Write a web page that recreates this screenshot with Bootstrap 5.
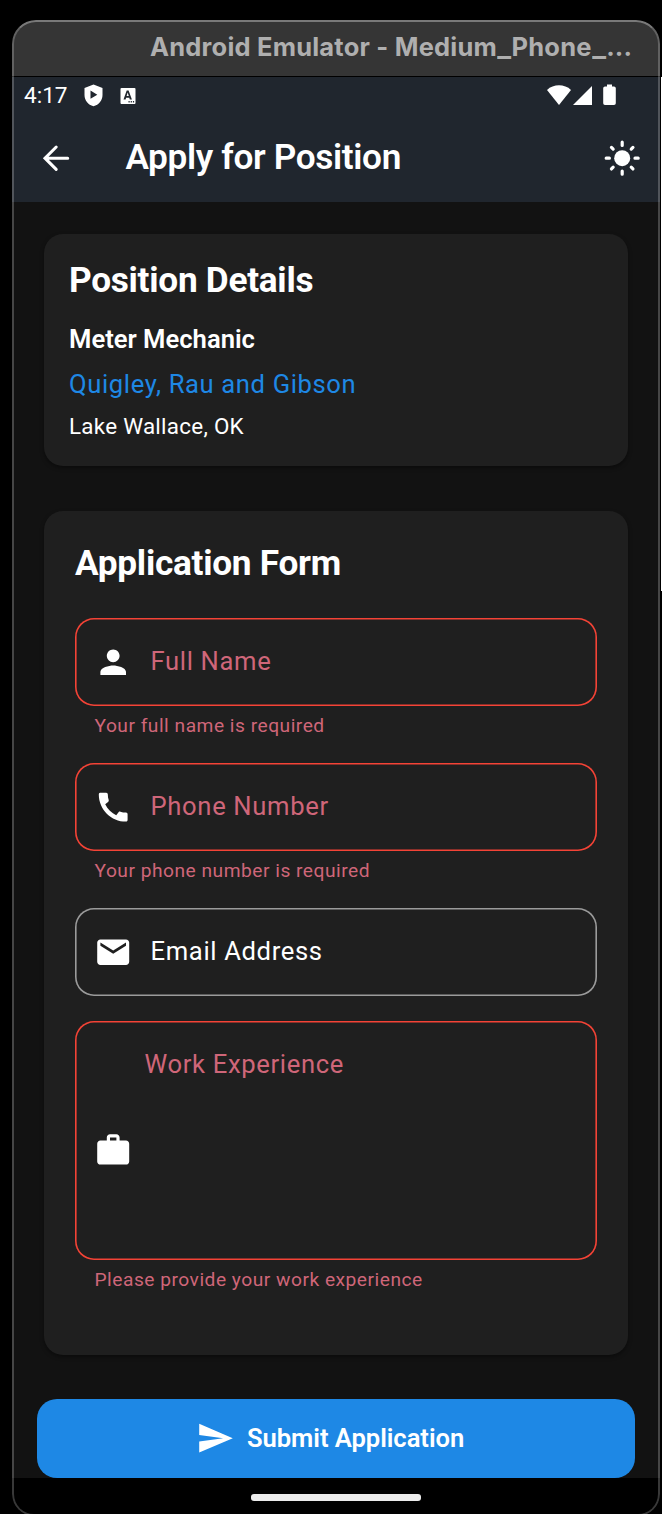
<!DOCTYPE html>
<html lang="en" data-bs-theme="dark">
<head>
<meta charset="utf-8">
<meta name="viewport" content="width=device-width, initial-scale=1">
<title>Apply for Position</title>
<link rel="stylesheet" href="https://cdn.jsdelivr.net/npm/bootstrap@5.3.0/dist/css/bootstrap.min.css">
<style>
  html, body { background: #000; }
  body { width: 662px; height: 1514px; overflow: hidden; color: #fff; font-family: Roboto, "Liberation Sans", sans-serif; line-height: 1; }
  svg { display: block; flex: none; fill: currentColor; }
  .desktop { height: 1514px; padding: 20px 0 0 12px; overflow: hidden; }
  .emulator { width: 648px; height: 1496px; border-radius: 24px 24px 22px 22px; background: #121212; }
  .rim { inset: 0; border: 2px solid rgba(255,255,255,.22); border-top-color: rgba(255,255,255,.34); border-radius: inherit; pointer-events: none; }
  .titlebar { height: 57px; padding: 0 0 4px 138px; background: #353535; border-bottom: 1px solid #000; color: #afafaf; font: 700 25.5px Inter, sans-serif; letter-spacing: .2px; font-feature-settings: "calt" 0; white-space: nowrap; }
  .wide { display: inline-block; transform: scaleX(1.14); margin: 0 1.1px; }
  .top-area { height: 125px; background: #20262e; }
  .status { height: 37px; padding: 0 44px 0 12px; }
  .clock { font-size: 22.6px; width: 59.5px; padding-top: 2px; }
  .appbar { height: 88px; padding: 0 19px 0 25px; }
  .page-title { font-size: 35.2px; font-weight: 600; letter-spacing: -.35px; margin: -2px 0 0 50px; }
  .screen { height: 1276px; padding: 32px 25px 0; }
  .panel { margin: 0 7px; border: 0; border-radius: 19px; background: #1f1f1f; box-shadow: 0 2px 4px rgba(0,0,0,.4); color: #fff; }
  .details { height: 232px; padding: 25px; margin-bottom: 45px; }
  .form-panel { height: 844px; padding: 32px 31px 0; margin-bottom: 44px; }
  .heading { font-size: 35.2px; line-height: 42px; font-weight: 700; letter-spacing: -.27px; margin: 0; }
  .form-panel .heading { margin-top: -1px; margin-bottom: 34px; }
  .role { font-size: 25.6px; line-height: 30px; font-weight: 600; margin-top: 23px; }
  .company { font-size: 25.6px; line-height: 30px; letter-spacing: .62px; color: #1e88e5; margin-top: 15px; }
  .place { font-size: 22.4px; line-height: 30px; letter-spacing: .27px; margin-top: 12px; }
  .field { height: 88px; padding: 0 18.500px; border-radius: 19px; box-shadow: inset 0 0 0 1.6px #9b9b9b; font-size: 25.6px; letter-spacing: .65px; gap: 18.700px; }
  .field.bad { box-shadow: inset 0 0 0 1.6px #f44336; }
  .bad .caption, .problem { color: #cf6679; }
  .problem { font-size: 19.2px; line-height: 24px; letter-spacing: .5px; height: 57px; padding: 7.500px 0 0 19.500px; }
  .field.tall { height: 239px; gap: 12.700px; align-items: flex-start; }
  .tall svg { margin-top: 110px; }
  .tall .caption { margin-top: 31px; }
  .submit { height: 79px; border-radius: 20px; border: 0; background: #1e88e5; color: #fff; font-size: 25.6px; font-weight: 600; letter-spacing: -.05px; gap: 12.800px; line-height: 1; padding: 0 12px 0 0; }
  .nav-area { height: 36px; background: #000; }
  .pill { width: 170px; height: 7px; border-radius: 3px; background: #ececec; margin-top: 2px; }
  .tail { flex: 1; background: #000; }
  .edge { top: 77px; right: 0; width: 1px; height: 514px; background: #fff; }
</style>
</head>
<body>
<main class="desktop position-relative">
  <section class="emulator position-relative overflow-hidden d-flex flex-column">
    <header class="titlebar d-flex align-items-center"><span>Android Emulator - Medium<span class="wide">_</span>Phone<span class="wide">_</span>...</span></header>
    <div class="top-area">
      <div class="status d-flex align-items-center">
        <span class="clock">4:17</span>
        <svg width="19" height="23" viewBox="0 0 19 23"><path fill-rule="evenodd" d="M9.500.5 18.500 4v7c0 5.500-3.500 9.700-9 11.300C4 20.700.5 16.500.5 11V4zM6.500 6.600v8.200L13.300 10.700z"/></svg>
        <svg class="ms-3" width="19" height="18" viewBox="0 0 19 18"><path fill-rule="evenodd" d="M2.500 1h13q1 0 1 1v14q0 1-1 1h-13q-1 0-1-1V2q0-1 1-1zM7.700 3.500 4.500 12.500h2.100l.5-1.700h3.200l.5 1.700h2.100L9.600 3.500zm-.1 5.600 1.100-3.600 1.100 3.600zM9.500 14v1.500h1.200V14zm2.200 0v1.500h1.200V14zm2.200 0v1.500h1.200V14z"/></svg>
        <svg class="ms-auto" width="24" height="20" viewBox="0 0 24 20" style="margin-top:-2px"><path d="M0 5C6.500-1.200 17.500-1.200 24 5L12 20z"/></svg>
        <svg width="20" height="20" viewBox="0 0 20 20" style="margin-left:1px;margin-top:-1px"><path d="M20 1v19H1z"/></svg>
        <svg width="13" height="22" viewBox="0 0 13 22" style="margin-left:11px;margin-top:-2px"><path d="M4 .5h5v2h2q1.800 0 1.800 1.800v15q0 1.800-1.800 1.800H2q-1.800 0-1.800-1.800v-15Q.2 2.500 2 2.500h2z"/></svg>
      </div>
      <nav class="appbar d-flex align-items-center">
        <svg width="38.400" height="38.400" viewBox="0 0 24 24"><path d="M19.200 12H5.500M12 5l-7 7 7 7" fill="none" stroke="currentColor" stroke-width="1.900" stroke-linecap="round"/></svg>
        <h1 class="page-title">Apply for Position</h1>
        <svg class="ms-auto" width="38.400" height="38.400" viewBox="0 0 24 24"><circle cx="12" cy="12" r="5"/><path d="M12 2v2M12 20v2M2 12h2M20 12h2M5.280 5.280l1.070 1.070M17.650 17.650l1.070 1.070M5.280 18.720l1.070-1.070M17.650 6.350l1.070-1.070" stroke="currentColor" stroke-width="2" stroke-linecap="round"/></svg>
      </nav>
    </div>
    <div class="screen">
      <article class="card panel details">
        <h2 class="heading">Position Details</h2>
        <div class="role">Meter Mechanic</div>
        <div class="company">Quigley, Rau and Gibson</div>
        <div class="place">Lake Wallace, OK</div>
      </article>
      <form class="card panel form-panel">
        <h2 class="heading">Application Form</h2>
        <div class="field bad d-flex align-items-center">
          <svg width="38.400" height="38.400" viewBox="0 0 24 24"><path d="M12 12c2.210 0 4-1.790 4-4s-1.790-4-4-4-4 1.790-4 4 1.790 4 4 4zm0 2c-2.670 0-8 1.340-8 4v2h16v-2c0-2.660-5.330-4-8-4z"/></svg>
          <span class="caption">Full Name</span>
        </div>
        <div class="problem">Your full name is required</div>
        <div class="field bad d-flex align-items-center">
          <svg width="38.400" height="38.400" viewBox="0 0 24 24"><path d="M20.010 15.380c-1.230 0-2.420-.2-3.530-.56-.35-.12-.74-.03-1.010.24l-1.570 1.970c-2.830-1.350-5.480-3.900-6.890-6.830l1.950-1.660c.27-.28.35-.67.24-1.020-.37-1.110-.56-2.300-.56-3.530 0-.54-.45-.99-.99-.99H4.190C3.650 3 3 3.240 3 3.990 3 13.280 10.730 21 20.010 21c.71 0 .99-.63.99-1.180v-3.450c0-.54-.45-.99-.99-.99z"/></svg>
          <span class="caption">Phone Number</span>
        </div>
        <div class="problem">Your phone number is required</div>
        <div class="field d-flex align-items-center" style="margin-bottom:25px">
          <svg width="38.400" height="38.400" viewBox="0 0 24 24"><path d="M20 4H4c-1.100 0-1.990.9-1.990 2L2 18c0 1.100.9 2 2 2h16c1.100 0 2-.9 2-2V6c0-1.100-.9-2-2-2zm0 4l-8 5-8-5V6l8 5 8-5v2z"/></svg>
          <span class="caption">Email Address</span>
        </div>
        <div class="field bad tall d-flex">
          <svg width="38.400" height="38.400" viewBox="0 0 24 24"><path d="M20 6h-4V4c0-1.110-.89-2-2-2h-4c-1.110 0-2 .89-2 2v2H4c-1.110 0-1.990.89-1.990 2L2 19c0 1.110.89 2 2 2h16c1.110 0 2-.89 2-2V8c0-1.110-.89-2-2-2zm-6 0h-4V4h4v2z"/></svg>
          <span class="caption">Work Experience</span>
        </div>
        <div class="problem">Please provide your work experience</div>
      </form>
      <button type="button" class="btn submit w-100 d-flex align-items-center justify-content-center">
        <svg width="38.400" height="38.400" viewBox="0 0 24 24"><path d="M2.010 21L23 12 2.010 3 2 10l15 2-15 2z"/></svg>
        <span>Submit Application</span>
      </button>
    </div>
    <footer class="nav-area d-flex align-items-center justify-content-center"><div class="pill"></div></footer>
    <div class="tail"></div>
    <div class="rim position-absolute"></div>
  </section>
  <div class="edge position-absolute"></div>
</main>
<script src="https://cdn.jsdelivr.net/npm/bootstrap@5.3.0/dist/js/bootstrap.bundle.min.js"></script>
</body>
</html>
